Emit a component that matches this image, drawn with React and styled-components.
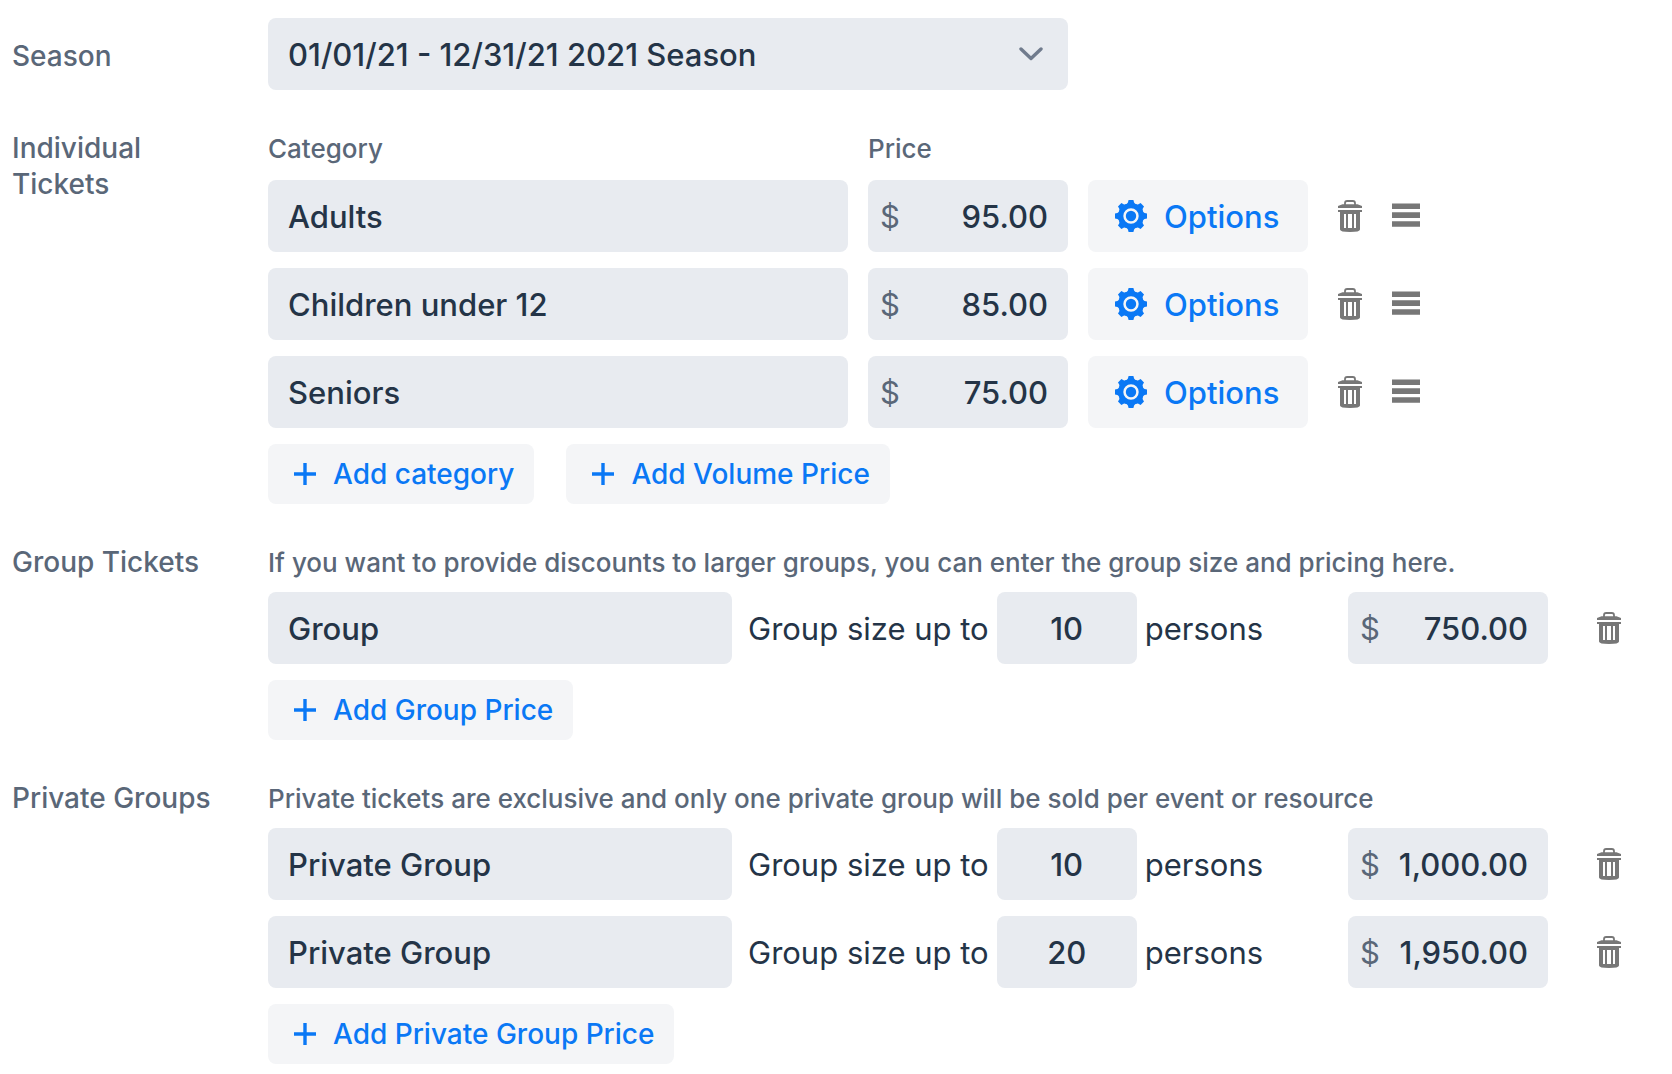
import React from "react";
import styled, { createGlobalStyle } from "styled-components";

const individualTickets = [
  { name: "Adults", price: "95.00" },
  { name: "Children under 12", price: "85.00" },
  { name: "Seniors", price: "75.00" },
];

const groupTickets = [{ name: "Group", size: "10", price: "750.00" }];

const privateGroups = [
  { name: "Private Group", size: "10", price: "1,000.00" },
  { name: "Private Group", size: "20", price: "1,950.00" },
];

function GearIcon() {
  const teeth = [0, 45, 90, 135, 180, 225, 270, 315];
  return (
    <svg width="32" height="32" viewBox="-16 -16 32 32" aria-hidden="true">
      <circle r="10.2" fill="none" stroke="currentColor" strokeWidth="5" />
      <circle r="5.2" fill="currentColor" />
      {teeth.map((angle) => (
        <path
          key={angle}
          d="M-2.4 -16H2.4L3.1 -13.6Q3.6 -12.4 5.1 -11.8L4 -9H-4L-5.1 -11.8Q-3.6 -12.4 -3.1 -13.6Z"
          fill="currentColor"
          transform={`rotate(${angle})`}
        />
      ))}
    </svg>
  );
}

function TrashIcon() {
  return (
    <svg width="24" height="32" viewBox="0 0 24 32" aria-hidden="true">
      <path
        d="M7 5V3.2Q7 1 9.2 1H14.8Q17 1 17 3.2V5"
        fill="none"
        stroke="currentColor"
        strokeWidth="1.8"
      />
      <path d="M0 8V6L4.5 4.2H19.5L24 6V8Z" fill="currentColor" />
      <path
        d="M0 10H24V12H22V29.5Q22 32 12 32Q2 32 2 29.5V12H0ZM6 14V28H8V14ZM10 14V28H14V14ZM16 14V28H18V14Z"
        fill="currentColor"
        fillRule="evenodd"
      />
    </svg>
  );
}

function BarsIcon() {
  return (
    <svg width="28" height="26" viewBox="0 0 28 26" aria-hidden="true">
      <path d="M0 .4H28V6H0ZM0 9.3H28V14.9H0ZM0 18.2H28V23.8H0Z" fill="currentColor" />
    </svg>
  );
}

function PlusIcon() {
  return (
    <svg width="22" height="22" viewBox="0 0 22 22" aria-hidden="true">
      <path d="M11 0V22M0 11H22" stroke="currentColor" strokeWidth="3.4" />
    </svg>
  );
}

function ChevronIcon() {
  return (
    <svg width="24" height="14" viewBox="0 0 24 14" aria-hidden="true">
      <path
        d="M2 2L12 11.5L22 2"
        fill="none"
        stroke="currentColor"
        strokeWidth="3.4"
        strokeLinecap="round"
        strokeLinejoin="round"
      />
    </svg>
  );
}

function Price({ value, label }) {
  return (
    <PriceField>
      <span>$</span>
      <input type="text" defaultValue={value} aria-label={label} />
    </PriceField>
  );
}

function AddButton({ children }) {
  return (
    <SmallButton type="button">
      <PlusIcon />
      {children}
    </SmallButton>
  );
}

function GroupRow({ name, size, price }) {
  return (
    <Row>
      <GroupName type="text" defaultValue={name} aria-label="Group name" />
      <SizeField>
        <span>Group size up to</span>
        <SizeInput type="text" defaultValue={size} />
        <span>persons</span>
      </SizeField>
      <Price value={price} label={`${name} price`} />
      <GroupDelete type="button" aria-label={`Delete ${name}`}>
        <TrashIcon />
      </GroupDelete>
    </Row>
  );
}

function App() {
  return (
    <>
      <GlobalStyle />
      <Form>
        <Section>
          <SeasonLabel htmlFor="season">Season</SeasonLabel>
          <SelectWrap>
            <select id="season">
              <option>01/01/21 - 12/31/21 2021 Season</option>
            </select>
            <ChevronIcon />
          </SelectWrap>
        </Section>

        <Section>
          <Title>
            Individual
            <br />
            Tickets
          </Title>
          <Content>
            <ColumnNames>
              <span>Category</span>
              <span>Price</span>
            </ColumnNames>
            {individualTickets.map((ticket) => (
              <Row key={ticket.name}>
                <CategoryInput
                  type="text"
                  defaultValue={ticket.name}
                  aria-label="Category"
                />
                <CategoryPrice>
                  <Price value={ticket.price} label={`${ticket.name} price`} />
                </CategoryPrice>
                <OptionsButton type="button">
                  <GearIcon />
                  Options
                </OptionsButton>
                <RowTools>
                  <IconButton type="button" aria-label={`Delete ${ticket.name}`}>
                    <TrashIcon />
                  </IconButton>
                  <IconButton type="button" aria-label={`Move ${ticket.name}`}>
                    <BarsIcon />
                  </IconButton>
                </RowTools>
              </Row>
            ))}
            <Buttons>
              <AddButton>Add category</AddButton>
              <AddButton>Add Volume Price</AddButton>
            </Buttons>
          </Content>
        </Section>

        <Section>
          <Title>Group Tickets</Title>
          <Content>
            <Hint>
              If you want to provide discounts to larger groups, you can enter
              the group size and pricing here.
            </Hint>
            {groupTickets.map((group) => (
              <GroupRow key={group.size} {...group} />
            ))}
            <Buttons>
              <AddButton>Add Group Price</AddButton>
            </Buttons>
          </Content>
        </Section>

        <Section>
          <Title>Private Groups</Title>
          <Content>
            <Hint>
              Private tickets are exclusive and only one private group will be
              sold per event or resource
            </Hint>
            {privateGroups.map((group) => (
              <GroupRow key={group.size} {...group} />
            ))}
            <Buttons>
              <AddButton>Add Private Group Price</AddButton>
            </Buttons>
          </Content>
        </Section>
      </Form>
    </>
  );
}

const GlobalStyle = createGlobalStyle`
  * {
    box-sizing: border-box;
  }

  body {
    margin: 0;
    background-color: #fff;
    color: #243447;
    font-family: Inter, "Liberation Sans", sans-serif;
    font-size: 31px;
  }

  input,
  select,
  button {
    margin: 0;
    border: 0;
    font-family: inherit;
    font-weight: 500;
  }
`;

const Form = styled.form`
  display: flex;
  flex-direction: column;
  gap: 40px;
  padding: 18px 51px 10px 12px;
`;

const Section = styled.section`
  display: grid;
  grid-template-columns: 256px minmax(0, 1fr);
`;

const Title = styled.h2`
  margin: 0;
  color: #5a6778;
  font-size: 28px;
  font-weight: 500;
  line-height: 36px;
`;

const SeasonLabel = styled.label`
  padding-top: 20px;
  color: #5a6778;
  font-size: 28px;
  font-weight: 500;
  line-height: 36px;
`;

const Content = styled.div`
  display: flex;
  flex-direction: column;
  gap: 16px;
`;

const SelectWrap = styled.div`
  display: grid;
  align-items: center;
  max-width: 800px;

  select,
  svg {
    grid-area: 1 / 1;
  }

  select {
    width: 100%;
    height: 72px;
    padding: 0 64px 0 20px;
    border-radius: 8px;
    background-color: #e8ebf0;
    color: #243447;
    font-size: 31px;
    appearance: none;
  }

  svg {
    justify-self: end;
    margin-right: 25px;
    color: #707b8d;
    pointer-events: none;
  }
`;

const ColumnNames = styled.div`
  display: grid;
  grid-template-columns: minmax(0, 580px) 200px;
  gap: 20px;
  margin-bottom: -3px;
  color: #5a6778;
  font-size: 26px;
  font-weight: 500;
  line-height: 37px;
`;

const Hint = styled.p`
  margin: 0 0 -5px;
  color: #5a6778;
  font-size: 26px;
  font-weight: 500;
  line-height: 37px;
`;

const Row = styled.div`
  display: flex;
  align-items: center;
`;

const TextInput = styled.input`
  min-width: 0;
  height: 72px;
  padding: 0 20px;
  border-radius: 8px;
  background-color: #e8ebf0;
  color: #243447;
  font-size: 31px;
`;

const CategoryInput = styled(TextInput)`
  flex: 0 1 580px;
`;

const GroupName = styled(TextInput)`
  flex: 1 1 0;
`;

const SizeInput = styled(TextInput)`
  flex: none;
  width: 140px;
  text-align: center;
`;

const SizeField = styled.label`
  display: flex;
  flex: none;
  align-items: center;
  gap: 8px;
  width: 520px;
  margin: 0 80px 0 16px;
  white-space: nowrap;
`;

const PriceField = styled.div`
  display: flex;
  flex: none;
  align-items: center;
  width: 200px;
  height: 72px;
  padding: 0 20px 0 12px;
  border-radius: 8px;
  background-color: #e8ebf0;

  span {
    color: #5a6778;
  }

  input {
    flex: 1;
    width: 100%;
    min-width: 0;
    height: 72px;
    padding: 0;
    background: none;
    color: #243447;
    font-size: 31px;
    text-align: right;
  }
`;

const CategoryPrice = styled.div`
  flex: none;
  margin: 0 20px;
`;

const Button = styled.button`
  display: flex;
  flex: none;
  align-items: center;
  border-radius: 8px;
  background-color: #f4f5f7;
  color: #0a78f5;
  white-space: nowrap;
  cursor: pointer;
`;

const OptionsButton = styled(Button)`
  gap: 17px;
  height: 72px;
  padding: 0 29px 0 27px;
  font-size: 31px;
`;

const SmallButton = styled(Button)`
  gap: 17px;
  height: 60px;
  padding: 0 20px 0 26px;
  font-size: 28px;
`;

const Buttons = styled.div`
  display: flex;
  flex-wrap: wrap;
  gap: 32px;
`;

const IconButton = styled.button`
  display: flex;
  flex: none;
  padding: 0;
  background: none;
  color: #777;
  cursor: pointer;
`;

const GroupDelete = styled(IconButton)`
  margin-left: 49px;
`;

const RowTools = styled.div`
  display: flex;
  align-items: center;
  gap: 30px;
  margin-left: 30px;
`;

export default App;
